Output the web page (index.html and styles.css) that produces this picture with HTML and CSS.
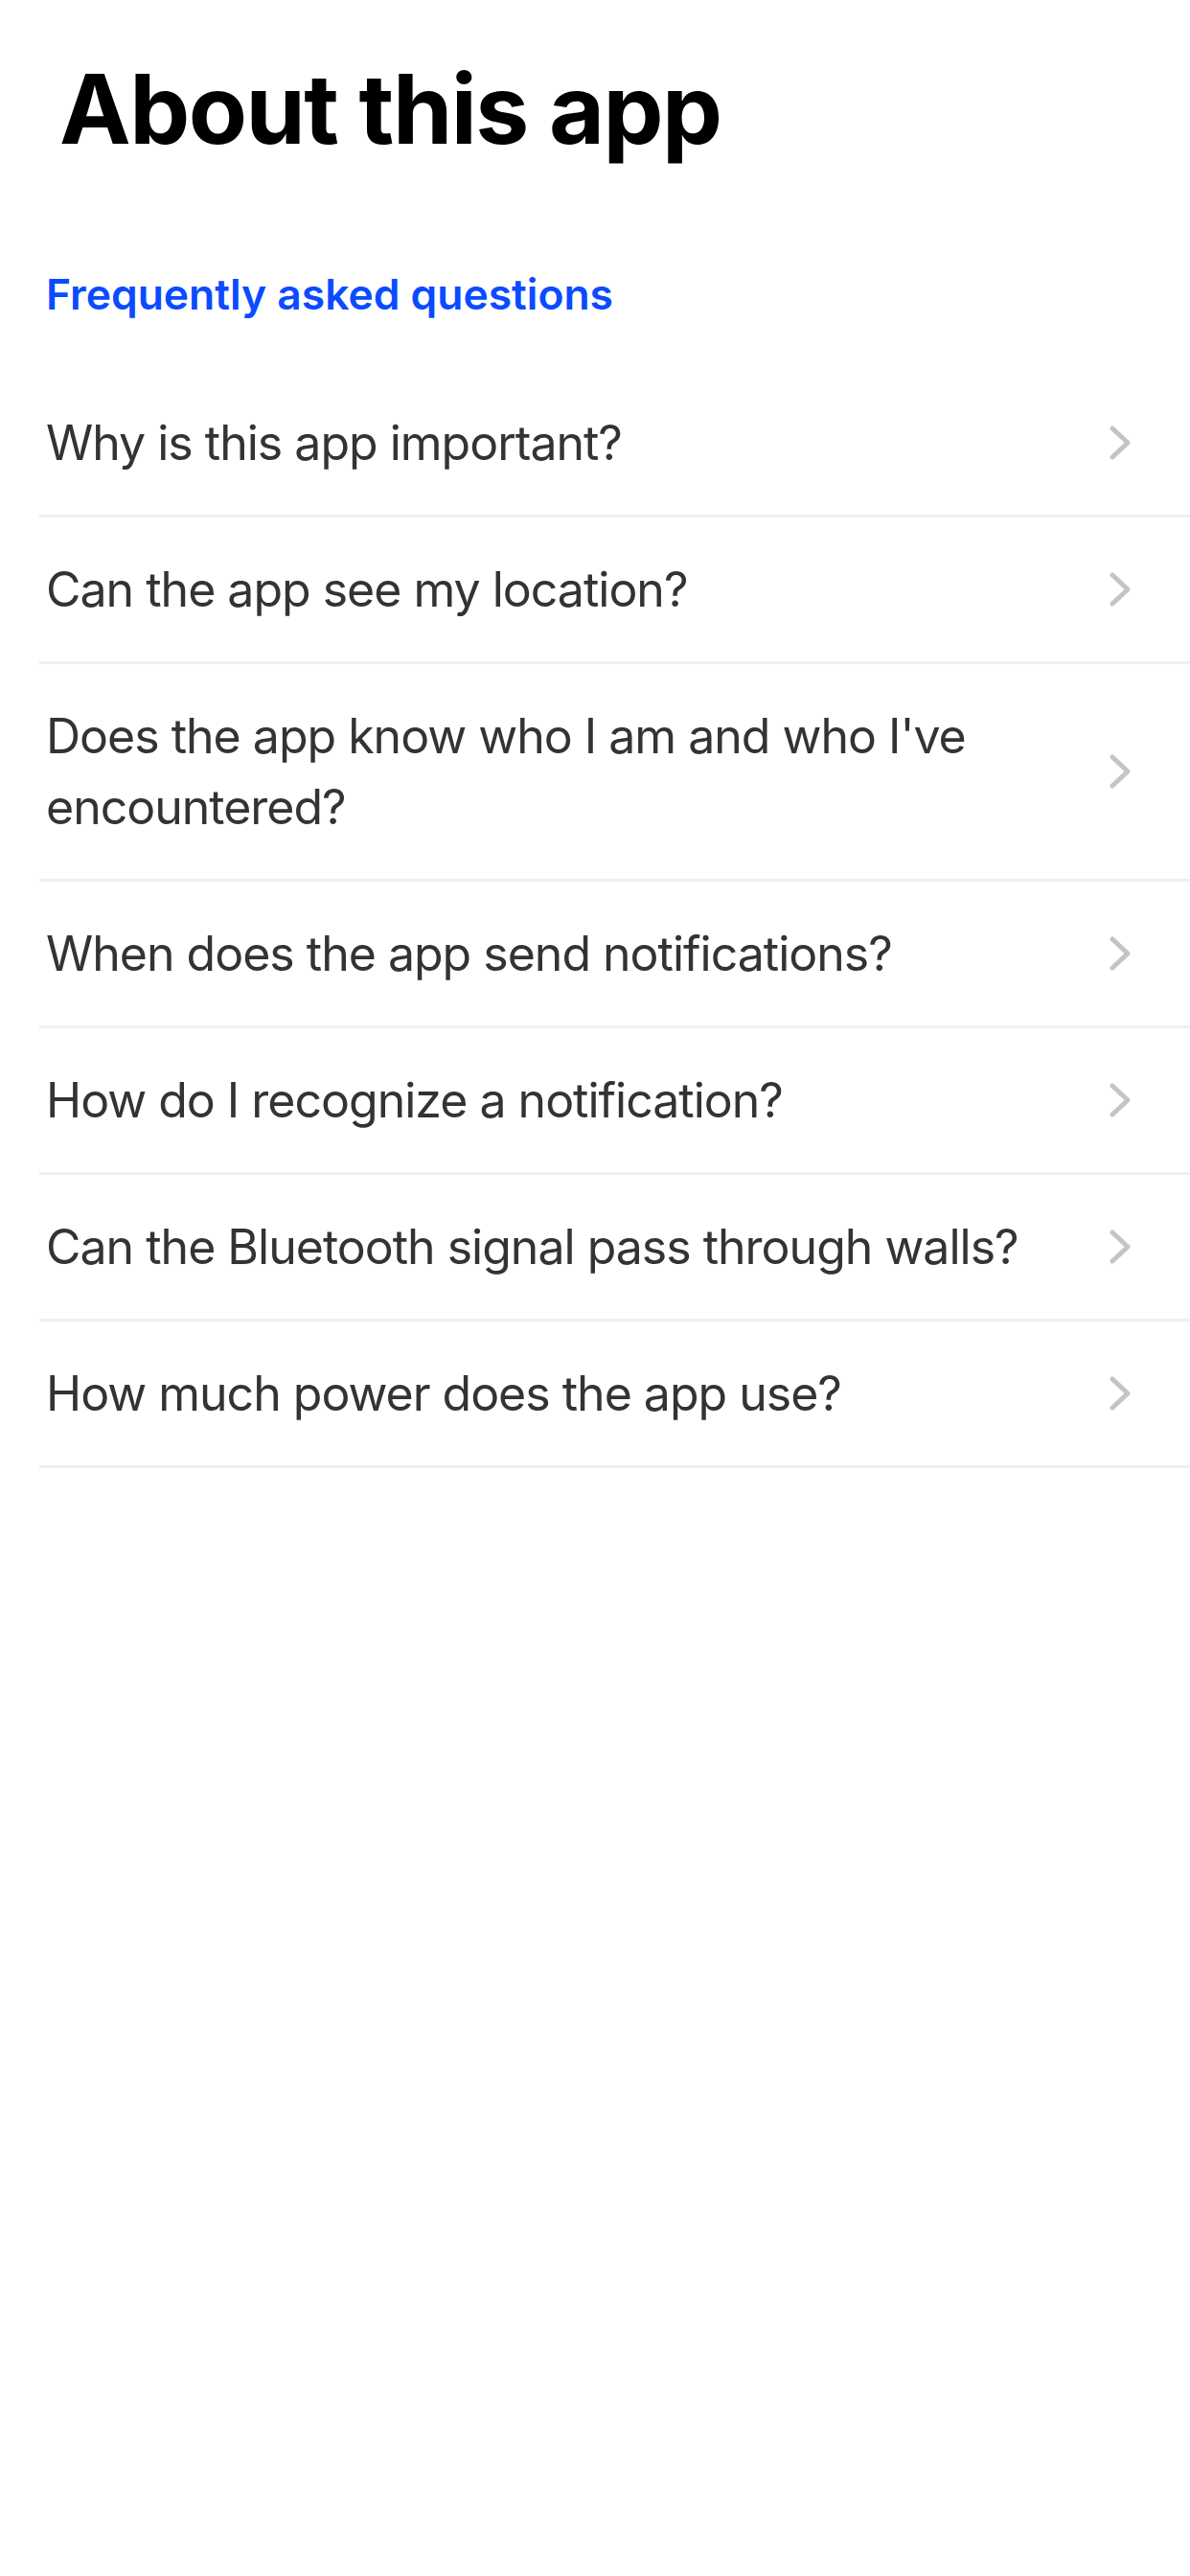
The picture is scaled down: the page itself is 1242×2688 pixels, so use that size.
FILE: index.html
```html
<!DOCTYPE html>
<html lang="en">
<head>
<meta charset="utf-8">
<title>About this app</title>
<link rel="stylesheet" href="styles.css">
</head>
<body>
<main class="screen">
  <h1 class="title">About this app</h1>
  <h2 class="section">Frequently asked questions</h2>
  <ul class="list">
    <li class="row"><span class="label">Why is this app important?</span><svg class="chev" viewBox="0 0 22 36"><path d="M3 3 L19 18 L3 33"/></svg></li>
    <li class="row"><span class="label">Can the app see my location?</span><svg class="chev" viewBox="0 0 22 36"><path d="M3 3 L19 18 L3 33"/></svg></li>
    <li class="row"><span class="label">Does the app know who I am and who I've encountered?</span><svg class="chev" viewBox="0 0 22 36"><path d="M3 3 L19 18 L3 33"/></svg></li>
    <li class="row"><span class="label">When does the app send notifications?</span><svg class="chev" viewBox="0 0 22 36"><path d="M3 3 L19 18 L3 33"/></svg></li>
    <li class="row"><span class="label">How do I recognize a notification?</span><svg class="chev" viewBox="0 0 22 36"><path d="M3 3 L19 18 L3 33"/></svg></li>
    <li class="row"><span class="label">Can the Bluetooth signal pass through walls?</span><svg class="chev" viewBox="0 0 22 36"><path d="M3 3 L19 18 L3 33"/></svg></li>
    <li class="row"><span class="label">How much power does the app use?</span><svg class="chev" viewBox="0 0 22 36"><path d="M3 3 L19 18 L3 33"/></svg></li>
  </ul>
</main>
</body>
</html>
```
FILE: styles.css
```css
html, body {
  margin: 0;
  padding: 0;
  background: #ffffff;
}
body {
  font-family: Inter, "Liberation Sans", sans-serif;
  width: 1242px;
  min-height: 2688px;
}
.screen {
  display: flex;
  flex-direction: column;
}
.title {
  margin: 0;
  padding: 54px 0 0 62px;
  font-size: 100px;
  line-height: 120px;
  font-weight: 700;
  letter-spacing: -1.5px;
  color: #000;
}
.section {
  margin: 0;
  padding: 105px 0 0 48px;
  font-size: 44.4px;
  line-height: 56px;
  font-weight: 600;
  color: #0a4bff;
}
.list {
  list-style: none;
  margin: 52px 0 0 41px;
  padding: 0;
}
.row {
  display: flex;
  align-items: center;
  justify-content: space-between;
  min-height: 153px;
  padding: 0 62px 0 7px;
  border-bottom: 3px solid #efeff4;
  box-sizing: border-box;
}
.label {
  font-size: 50px;
  line-height: 74px;
  letter-spacing: -1px;
  color: #333333;
  max-width: 1095px;
  padding: 38px 0;
}
.chev {
  width: 22px;
  height: 36px;
  flex: none;
  fill: none;
  stroke: #c4c4c7;
  stroke-width: 5;
  stroke-linecap: round;
  stroke-linejoin: round;
}
```
